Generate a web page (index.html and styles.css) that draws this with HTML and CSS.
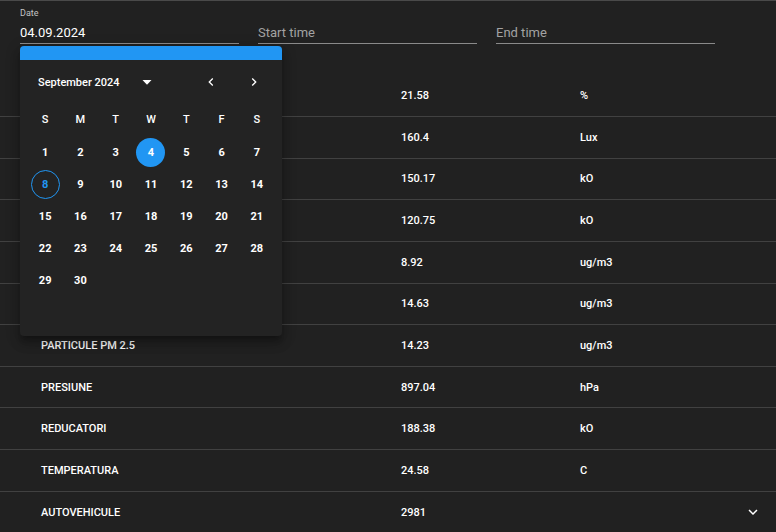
FILE: index.html
```html
<!DOCTYPE html>
<html lang="ro">
<head>
<meta charset="utf-8">
<title>Senzori</title>
<link rel="stylesheet" href="styles.css">
</head>
<body>
<div class="page">
  <div class="filters">
    <div class="field">
      <div class="label">Date</div>
      <div class="input value">04.09.2024</div>
    </div>
    <div class="field">
      <div class="label"></div>
      <div class="input placeholder">Start time</div>
    </div>
    <div class="field">
      <div class="label"></div>
      <div class="input placeholder">End time</div>
    </div>
  </div>

  <div class="table">
    <div class="row"><span></span><span>21.58</span><span>%</span><span></span></div>
    <div class="row"><span></span><span>160.4</span><span>Lux</span><span></span></div>
    <div class="row"><span></span><span>150.17</span><span>kO</span><span></span></div>
    <div class="row"><span></span><span>120.75</span><span>kO</span><span></span></div>
    <div class="row"><span></span><span>8.92</span><span>ug/m3</span><span></span></div>
    <div class="row"><span></span><span>14.63</span><span>ug/m3</span><span></span></div>
    <div class="row"><span>PARTICULE PM 2.5</span><span>14.23</span><span>ug/m3</span><span></span></div>
    <div class="row"><span>PRESIUNE</span><span>897.04</span><span>hPa</span><span></span></div>
    <div class="row"><span>REDUCATORI</span><span>188.38</span><span>kO</span><span></span></div>
    <div class="row"><span>TEMPERATURA</span><span>24.58</span><span>C</span><span></span></div>
    <div class="row"><span>AUTOVEHICULE</span><span>2981</span><span></span>
      <span class="expand"><svg width="18" height="18" viewBox="0 0 24 24"><path d="M16.59 8.59L12 13.17 7.41 8.59 6 10l6 6 6-6z" fill="#fff"/></svg></span>
    </div>
  </div>

  <div class="calendar">
    <div class="cal-bar"></div>
    <div class="cal-head">
      <span class="month">September 2024</span>
      <svg class="drop" width="10" height="5" viewBox="0 0 10 5"><path d="M0.5 0h9L5 4.8z" fill="#fff"/></svg>
      <span class="spacer"></span>
      <span class="nav"><svg width="16" height="16" viewBox="0 0 24 24"><path d="M15.41 7.41L14 6l-6 6 6 6 1.41-1.41L10.83 12z" fill="#fff"/></svg></span>
      <span class="nav"><svg width="16" height="16" viewBox="0 0 24 24"><path d="M10 6L8.59 7.41 13.17 12l-4.58 4.59L10 18l6-6z" fill="#fff"/></svg></span>
    </div>
    <div class="weekdays">
      <span>S</span><span>M</span><span>T</span><span>W</span><span>T</span><span>F</span><span>S</span>
    </div>
    <div class="days">
      <span class="day"><b>1</b></span><span class="day"><b>2</b></span><span class="day"><b>3</b></span><span class="day"><b class="selected">4</b></span><span class="day"><b>5</b></span><span class="day"><b>6</b></span><span class="day"><b>7</b></span>
      <span class="day"><b class="today">8</b></span><span class="day"><b>9</b></span><span class="day"><b>10</b></span><span class="day"><b>11</b></span><span class="day"><b>12</b></span><span class="day"><b>13</b></span><span class="day"><b>14</b></span>
      <span class="day"><b>15</b></span><span class="day"><b>16</b></span><span class="day"><b>17</b></span><span class="day"><b>18</b></span><span class="day"><b>19</b></span><span class="day"><b>20</b></span><span class="day"><b>21</b></span>
      <span class="day"><b>22</b></span><span class="day"><b>23</b></span><span class="day"><b>24</b></span><span class="day"><b>25</b></span><span class="day"><b>26</b></span><span class="day"><b>27</b></span><span class="day"><b>28</b></span>
      <span class="day"><b>29</b></span><span class="day"><b>30</b></span>
    </div>
  </div>
</div>
</body>
</html>
```

FILE: styles.css
```css
* { box-sizing: border-box; }

html, body {
  margin: 0;
  padding: 0;
  background: #212121;
  height: 100%;
  overflow: hidden;
}

body {
  font-family: Roboto, "Liberation Sans", Arial, sans-serif;
  color: #fff;
}

.page {
  position: relative;
  border-top: 1px solid #4a4a4a;
  height: 532px;
}

.filters {
  display: flex;
  gap: 19.5px;
  padding: 6px 0 0 20px;
}

.field {
  width: 218.5px;
}

.label {
  height: 12px;
  font-size: 9px;
  line-height: 12px;
  color: #c4c4c4;
}

.input {
  margin-top: 4px;
  height: 21px;
  font-size: 13px;
  line-height: 20px;
  border-bottom: 1px solid #8a8a8a;
}

.value { color: #fff; }
.placeholder { color: #a3a3a3; }

.table {
  margin-top: 31.3px;
}

.row {
  display: grid;
  grid-template-columns: 360px 179px 1fr 40px;
  align-items: center;
  height: 41.65px;
  padding-left: 41px;
  padding-top: 0;
  border-bottom: 1px solid #414141;
  font-size: 11px;
  font-weight: 500;
  color: #fff;
}

.expand {
  display: flex;
  justify-content: flex-start;
  padding-left: 8px;
}
.expand svg { display: block; }

.calendar {
  position: absolute;
  left: 20px;
  top: 45px;
  width: 262px;
  height: 290px;
  background: #232323;
  border-radius: 4px;
  overflow: hidden;
  box-shadow: 0 5px 5px -3px rgba(0,0,0,.25), 0 8px 10px 1px rgba(0,0,0,.18), 0 3px 14px 2px rgba(0,0,0,.15);
}

.cal-bar {
  height: 14px;
  background: #2196f3;
}

.cal-head {
  display: flex;
  align-items: center;
  height: 24px;
  margin-top: 10px;
  padding: 0 16px 0 18px;
}

.month {
  font-size: 11px;
  font-weight: 500;
}

.drop {
  display: block;
  margin-left: 22px;
}

.spacer { flex: 1; }

.nav {
  width: 24px;
  height: 24px;
  display: flex;
  align-items: center;
  justify-content: center;
}
.nav + .nav { margin-left: 19px; }
.nav svg { display: block; }

.weekdays {
  display: grid;
  grid-template-columns: repeat(7, 1fr);
  margin-top: 15px;
  padding: 0 7.5px;
  height: 20px;
  align-items: center;
  font-size: 11px;
  font-weight: 500;
  text-align: center;
}

.days {
  display: grid;
  grid-template-columns: repeat(7, 1fr);
  grid-auto-rows: 32px;
  margin-top: 7px;
  padding: 0 7.5px;
}

.day {
  display: flex;
  align-items: center;
  justify-content: center;
}

.day b {
  width: 29px;
  height: 29px;
  border-radius: 50%;
  display: flex;
  align-items: center;
  justify-content: center;
  font-size: 11px;
  font-weight: 700;
  color: #fff;
}

.day b.selected {
  background: #2196f3;
}

.day b.today {
  border: 1px solid #2196f3;
  color: #2196f3;
}
```
